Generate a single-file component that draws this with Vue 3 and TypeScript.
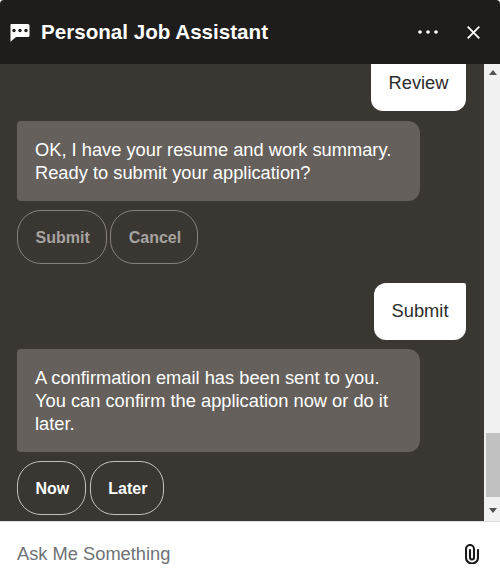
<template>
  <div class="chat">
    <header class="header">
      <svg class="logo" width="20" height="18" viewBox="0 0 20 18">
        <path d="M1.5 0H18a1.5 1.5 0 0 1 1.5 1.5v10A1.5 1.5 0 0 1 18 13H6l-5.5 4.7V1a1 1 0 0 1 1-1z" fill="#fff" />
        <circle cx="4" cy="6.5" r="1.7" fill="#1e1d1b" />
        <circle cx="10" cy="6.5" r="1.7" fill="#1e1d1b" />
        <circle cx="16" cy="6.5" r="1.7" fill="#1e1d1b" />
      </svg>
      <h1 class="title">Personal Job Assistant</h1>
      <div class="actions">
        <svg width="20" height="6" viewBox="0 0 20 6" fill="#fff">
          <circle cx="2" cy="3" r="1.8" />
          <circle cx="10" cy="3" r="1.8" />
          <circle cx="18" cy="3" r="1.8" />
        </svg>
        <svg width="13" height="13" viewBox="0 0 13 13" stroke="#fff" stroke-width="1.8" fill="none">
          <path d="M.7.7l11.6 11.6M12.3.7L.7 12.3" />
        </svg>
      </div>
    </header>

    <main class="body">
      <div class="messages">
        <div class="bubble user first">Review</div>
        <div class="bubble agent">OK, I have your resume and work summary. Ready to submit your application?</div>
        <div class="choices">
          <button v-for="c in oldChoices" :key="c" class="choice off">{{ c }}</button>
        </div>
        <div class="bubble user second">Submit</div>
        <div class="bubble agent">A confirmation email has been sent to you. You can confirm the application now or do it later.</div>
        <div class="choices">
          <button v-for="c in newChoices" :key="c" class="choice">{{ c }}</button>
        </div>
      </div>
      <div class="scrollbar">
        <span class="arrow up"></span>
        <div class="track"><div class="thumb"></div></div>
        <span class="arrow down"></span>
      </div>
    </main>

    <footer class="composer">
      <span class="placeholder">Ask Me Something</span>
      <svg width="14" height="20" viewBox="0 0 14 20" fill="none" stroke="#1a1a1a" stroke-width="2.1" stroke-linecap="round">
        <path d="M13 6v7.5a6 6 0 0 1-12 0V5a4 4 0 0 1 8 0v8.5a2 2 0 0 1-4 0V6" />
      </svg>
    </footer>
  </div>
</template>

<script setup lang="ts">
const oldChoices: string[] = ["Submit", "Cancel"];
const newChoices: string[] = ["Now", "Later"];
</script>

<style>
html,
body {
  margin: 0;
  background: #fff;
}
</style>

<style scoped>
.chat {
  width: 500px;
  height: 584px;
  display: flex;
  flex-direction: column;
  font-family: "Liberation Sans", Arial, sans-serif;
  overflow: hidden;
}
.header {
  height: 64px;
  flex: none;
  box-sizing: border-box;
  background: #1e1d1b;
  border-radius: 4px 4px 0 0;
  display: flex;
  align-items: center;
  padding: 0 20px 0 10px;
  color: #fff;
}
.logo {
  margin-right: 11px;
  margin-top: 1px;
}
.title {
  margin: 0;
  font-size: 20.6px;
  font-weight: 700;
}
.actions {
  margin-left: auto;
  display: flex;
  align-items: center;
  gap: 29px;
}
.body {
  flex: 1;
  min-height: 0;
  display: flex;
  background: #3a3632;
  border-bottom: 1px solid #ddd;
}
.messages {
  flex: 1;
  min-width: 0;
  padding: 0 18px 0 17px;
  display: flex;
  flex-direction: column;
  align-items: flex-start;
  overflow: hidden;
}
.bubble {
  font-size: 18.3px;
  line-height: 23px;
}
.user {
  align-self: flex-end;
  background: #fff;
  color: #2c2c2c;
  border-radius: 12px 2px 12px 12px;
  padding: 17px 17.5px;
}
.user.first {
  margin-top: -10px;
  margin-bottom: 10px;
}
.user.second {
  margin-top: 19px;
  margin-bottom: 9px;
  padding-top: 16px;
  padding-bottom: 18px;
}
.agent {
  width: 403px;
  box-sizing: border-box;
  background: #65605b;
  color: #fff;
  border-radius: 4px 12px 12px 4px;
  padding: 17px 18px;
}
.choices {
  display: flex;
  gap: 3.5px;
  margin-top: 9px;
}
.choice {
  height: 54px;
  padding: 1px 16px 0 17.5px;
  background: transparent;
  border: 1px solid #c4c0bb;
  border-radius: 24px;
  color: #fff;
  font: 700 16px "Liberation Sans", Arial, sans-serif;
}
.choice.off {
  border-color: #86817b;
  color: #a6a3a0;
}
.scrollbar {
  width: 16px;
  flex: none;
  background: #f1f1f1;
  display: flex;
  flex-direction: column;
  padding-left: 2px;
  box-sizing: border-box;
  align-items: center;
}
.arrow {
  flex: none;
  width: 0;
  height: 0;
  border-left: 4.5px solid transparent;
  border-right: 4.5px solid transparent;
}
.arrow.up {
  border-bottom: 5px solid #505050;
  margin: 6px 0;
}
.arrow.down {
  border-top: 5px solid #505050;
  margin: 4px 0 8px;
}
.track {
  flex: 1;
  width: 100%;
  padding-bottom: 7px;
  display: flex;
  flex-direction: column;
  justify-content: flex-end;
}
.thumb {
  height: 64px;
  background: #c1c1c1;
}
.composer {
  flex: none;
  height: 62px;
  box-sizing: border-box;
  display: flex;
  align-items: center;
  justify-content: space-between;
  padding: 2px 21px 0 17px;
  background: #fff;
}
.placeholder {
  font-size: 18.3px;
  color: #6f7276;
}
</style>
